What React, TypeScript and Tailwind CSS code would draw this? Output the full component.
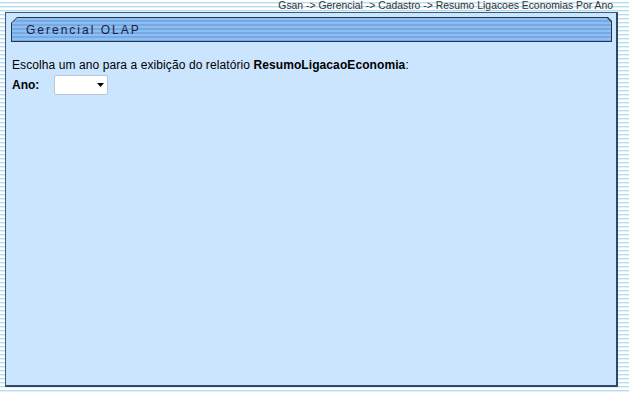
import React from "react";

export default function App() {
  return (
    <div
      className="w-[629px] h-[393px] overflow-hidden bg-[repeating-linear-gradient(to_bottom,#ffffff_0px,#ffffff_2px,#b5dcf1_2px,#b5dcf1_3px,#e2f1fa_3px,#e2f1fa_4px)]"
      style={{ fontFamily: '"Liberation Sans", Arial, sans-serif' }}
    >
      <div className="h-[12px] flex justify-end pr-[16px] text-[10.4px] leading-[11px] text-[#333]">
        Gsan -&gt; Gerencial -&gt; Cadastro -&gt; Resumo Ligacoes Economias Por Ano
      </div>
      <div className="ml-[5px] w-[613px] h-[375px] bg-[#cce5fe] border-l border-t border-[#3d5a78] border-r-2 border-b-2 border-r-[#2d4963] border-b-[#2d4963] pt-[4px] pl-[5px] pr-[4px] flex flex-col">
        <div
          className="relative h-[25px] w-[601px] bg-[#1f3550] [clip-path:polygon(6px_0,597px_0,601px_4px,601px_25px,0_25px,0_6px)]"
        >
          <div className="absolute inset-[1px] bg-[repeating-linear-gradient(to_bottom,#8fbff0_0px,#8fbff0_2px,#74a9e6_2px,#74a9e6_4px)] [clip-path:polygon(5px_0,595px_0,599px_4px,599px_23px,0_23px,0_5px)] flex items-center pl-[14px]">
            <span className="text-[12px] tracking-[2px] text-[#1c1c44] leading-none">
              Gerencial OLAP
            </span>
          </div>
        </div>
        <div className="mt-[16px] pl-[1px] text-[12px] tracking-[0.09px] leading-[14px] text-black">
          Escolha um ano para a exibição do relatório <b>ResumoLigacaoEconomia</b>:
        </div>
        <div className="mt-[3px] pl-[1px] flex items-center h-[20px]">
          <span className="w-[42px] text-[12px] font-bold text-black">Ano:</span>
          <div className="w-[54px] h-[20px] bg-white border border-[#b8c8d8] rounded-[2px] flex items-center justify-end pr-[3px]">
            <svg width="7" height="4" viewBox="0 0 7 4">
              <polygon points="0,0 7,0 3.5,4" fill="#000" />
            </svg>
          </div>
        </div>
      </div>
    </div>
  );
}
